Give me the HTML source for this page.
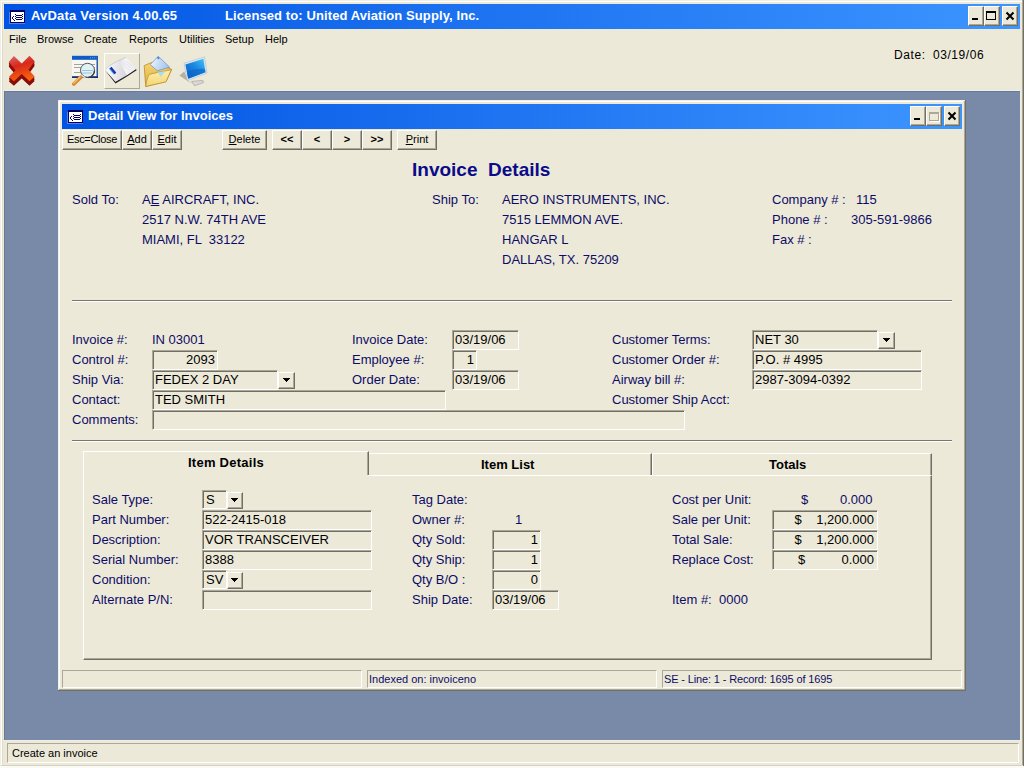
<!DOCTYPE html>
<html><head><meta charset="utf-8">
<style>
*{box-sizing:border-box;margin:0;padding:0}
html,body{width:1024px;height:768px;overflow:hidden;background:#f4f3ee;font-family:"Liberation Sans",sans-serif}
.a{position:absolute}
.t{position:absolute;white-space:pre;font-size:13px;line-height:20px;color:#0c0c68}
.k{color:#000}
.face{background:#ece9d8}
/* classic raised button */
.btn{position:absolute;background:#ece9d8;border-top:1px solid #fff;border-left:1px solid #fff;border-right:1px solid #716f64;border-bottom:1px solid #716f64;box-shadow:inset -1px -1px 0 #aca899;font-size:11px;line-height:17px;text-align:center;color:#000;white-space:pre}
/* sunken edit */
.ed{position:absolute;background:#ece9d8;border-top:1px solid #aca899;border-left:1px solid #aca899;border-right:1px solid #fff;border-bottom:1px solid #fff;box-shadow:inset 1px 1px 0 #716f64;font-size:13px;line-height:17px;color:#000;white-space:pre;padding-left:2px}
.cb{position:absolute;background:#ece9d8;border-top:1px solid #fff;border-left:1px solid #fff;border-right:1px solid #716f64;border-bottom:1px solid #716f64;box-shadow:inset -1px -1px 0 #aca899}
.pane{position:absolute;border-top:1px solid #aca899;border-left:1px solid #aca899;border-right:1px solid #fff;border-bottom:1px solid #fff}
.hl{position:absolute;height:1px}
</style></head>
<body>
<!-- main window frame -->
<div class="a face" style="left:0;top:0;width:1024px;height:766px"></div>
<div class="a" style="left:1px;top:1px;width:1px;height:764px;background:#fff"></div>
<div class="a" style="left:1px;top:1px;width:1021px;height:1px;background:#fff"></div>
<div class="a" style="left:1022px;top:0;width:1px;height:765px;background:#aca899"></div>
<div class="a" style="left:1023px;top:0;width:1px;height:766px;background:#716f64"></div>

<div class="a" style="left:0;top:765px;width:1022px;height:1px;background:#d4d0c4"></div><div class="a" style="left:0;top:766px;width:1024px;height:2px;background:#fbfbf6"></div>

<!-- main title bar -->
<div class="a" style="left:4px;top:4px;width:1016px;height:25px;background:linear-gradient(to right,#0054e3,#3d95ff)"></div>
<div class="t" style="left:31px;top:6px;font-size:13px;font-weight:bold;color:#fff;line-height:20px;letter-spacing:0.2px">AvData Version 4.00.65</div>
<div class="t" style="left:225px;top:6px;font-size:13px;font-weight:bold;color:#fff;line-height:20px;letter-spacing:0.1px">Licensed to: United Aviation Supply, Inc.</div>


<!-- main frame details -->
<div class="a" style="left:0;top:0;width:1022px;height:1px;background:#f1efe2"></div>
<div class="a" style="left:0;top:0;width:1px;height:766px;background:#f1efe2"></div>
<div class="a" style="left:2px;top:2px;width:1px;height:762px;background:#dedbcb"></div>
<!-- main caption icon -->
<svg class="a" style="left:9px;top:10px" width="16" height="14" viewBox="0 0 16 14" shape-rendering="crispEdges"><rect x="0" y="2" width="1" height="11" fill="#5a80e8"/><rect x="0" y="13" width="16" height="1" fill="#5a80e8"/><rect x="1" y="0" width="15" height="13" fill="#000060"/><rect x="2" y="2" width="13" height="10" fill="#fff"/><rect x="7" y="5" width="6" height="1" fill="#000060"/><rect x="7" y="7" width="6" height="1" fill="#000060"/><rect x="7" y="9" width="6" height="1" fill="#000060"/><rect x="6" y="4" width="1" height="1" fill="#000060"/><rect x="13" y="4" width="1" height="1" fill="#000060"/><rect x="6" y="6" width="1" height="1" fill="#000060"/><rect x="13" y="6" width="1" height="1" fill="#000060"/><rect x="6" y="8" width="1" height="1" fill="#000060"/><rect x="13" y="8" width="1" height="1" fill="#000060"/><rect x="4" y="6" width="1" height="1" fill="#000060"/><rect x="3" y="7" width="1" height="1" fill="#000060"/><rect x="3" y="8" width="1" height="1" fill="#000060"/><rect x="4" y="9" width="1" height="1" fill="#000060"/><rect x="5" y="10" width="1" height="1" fill="#000060"/></svg>
<!-- main caption buttons -->
<div class="cb" style="left:968px;top:6px;width:16px;height:20px"></div>
<div class="a" style="left:972px;top:18px;width:6px;height:2px;background:#000"></div>
<div class="cb" style="left:984px;top:6px;width:16px;height:20px"></div>
<div class="a" style="left:986px;top:11px;width:10px;height:9px;border:1px solid #000;border-top-width:2px"></div>
<div class="cb" style="left:1002px;top:6px;width:16px;height:20px"></div>
<svg class="a" style="left:1002px;top:6px" width="16" height="20" viewBox="0 0 16 20"><path d="M4.5 6.5l7 7M11.5 6.5l-7 7" stroke="#000" stroke-width="2"/></svg>

<!-- menu -->
<div class="t k" style="left:9px;top:31px;font-size:11px;line-height:16px">File</div>
<div class="t k" style="left:37px;top:31px;font-size:11px;line-height:16px">Browse</div>
<div class="t k" style="left:84px;top:31px;font-size:11px;line-height:16px">Create</div>
<div class="t k" style="left:129px;top:31px;font-size:11px;line-height:16px">Reports</div>
<div class="t k" style="left:179px;top:31px;font-size:11px;line-height:16px">Utilities</div>
<div class="t k" style="left:225px;top:31px;font-size:11px;line-height:16px">Setup</div>
<div class="t k" style="left:265px;top:31px;font-size:11px;line-height:16px">Help</div>
<div class="t k" style="left:894px;top:47px;font-size:12px;line-height:16px;letter-spacing:0.6px">Date:</div>
<div class="t k" style="left:933px;top:47px;font-size:12px;line-height:16px;letter-spacing:0.55px">03/19/06</div>


<!-- toolbar icons -->
<svg class="a" style="left:8px;top:55px" width="28" height="32" viewBox="0 0 28 32">
<defs><linearGradient id="xg" x1="0" y1="0" x2="0.3" y2="1"><stop offset="0" stop-color="#d86a6a"/><stop offset="0.45" stop-color="#d8281c"/><stop offset="1" stop-color="#f4600c"/></linearGradient></defs>
<g fill="#8a0c08">
<path transform="translate(0,4.5)" d="M5.9 1L13.7 8.5L21.5 0.7L26.7 6.2L20.5 14.8L26.7 21.6L21.5 26.25L13.7 19L5.9 26.25L0.9 22L7.5 15.3L0.7 7Z"/>
<path transform="translate(0,3)" d="M5.9 1L13.7 8.5L21.5 0.7L26.7 6.2L20.5 14.8L26.7 21.6L21.5 26.25L13.7 19L5.9 26.25L0.9 22L7.5 15.3L0.7 7Z"/>
<path transform="translate(0,1.5)" d="M5.9 1L13.7 8.5L21.5 0.7L26.7 6.2L20.5 14.8L26.7 21.6L21.5 26.25L13.7 19L5.9 26.25L0.9 22L7.5 15.3L0.7 7Z"/>
</g>
<path fill="url(#xg)" d="M5.9 1L13.7 8.5L21.5 0.7L26.7 6.2L20.5 14.8L26.7 21.6L21.5 26.25L13.7 19L5.9 26.25L0.9 22L7.5 15.3L0.7 7Z"/>
</svg>

<svg class="a" style="left:68px;top:50px" width="36" height="40" viewBox="68 50 36 40">
<rect x="72" y="56" width="25.5" height="22" fill="#f8f6f0"/>
<rect x="72" y="55.8" width="26" height="4" fill="#0e5cc6"/>
<path d="M90 57.8h6.5" stroke="#8ab8f0" stroke-width="0.8" stroke-dasharray="1 1"/>
<rect x="96.5" y="58" width="1.5" height="20" fill="#2a5aa8"/>
<rect x="72" y="76.2" width="26" height="1.8" fill="#14306c"/>
<path d="M74 64.5h21M74 67.5h21M74 72.5h21" stroke="#a4a29a" stroke-width="1"/>
<circle cx="87.5" cy="70.3" r="7" fill="#dff2f8" stroke="#505860" stroke-width="1"/>
<path d="M88.5 77.5a7 7 0 0 0 6-7" fill="none" stroke="#3a4048" stroke-width="1.4"/>
<path d="M82 70.5h11M82 73h10" stroke="#8fb4c4" stroke-width="0.8"/>
<path d="M81.5 75.5a7 7 0 0 0 4 2" fill="none" stroke="#ffffff" stroke-width="1.2"/>
<path d="M80.8 77.2L73.8 84" stroke="#d88a30" stroke-width="3.8" stroke-linecap="round"/>
<path d="M80 77L73.6 83.2" stroke="#f8c070" stroke-width="1.2" stroke-linecap="round"/>
</svg>

<div class="a" style="left:104px;top:53px;width:36px;height:36px;border-top:1px solid #fff;border-left:1px solid #fff;border-right:1px solid #aca899;border-bottom:1px solid #aca899"></div>
<svg class="a" style="left:102px;top:50px" width="40" height="40" viewBox="102 50 40 40">
<defs><linearGradient id="bk1" x1="0" y1="0" x2="1" y2="0"><stop offset="0" stop-color="#fdfdfd"/><stop offset="1" stop-color="#d4d4dc"/></linearGradient>
<linearGradient id="bk2" x1="0" y1="0" x2="1" y2="0"><stop offset="0" stop-color="#dcdce4"/><stop offset="0.4" stop-color="#f4f4f6"/><stop offset="1" stop-color="#ececf0"/></linearGradient></defs>
<path d="M105.2 70.5L115.5 83.6L127 76.6L136.6 70.3L135.8 68.6L126.5 75L115.5 81.6Z" fill="#1e1e1e"/>
<path d="M105.4 69.6L109.5 65.8L117.8 60.8L118.8 61.2L127 75.2L115.5 81.8Z" fill="url(#bk1)"/>
<path d="M118.8 61.2L120.5 59.8L126 57.3L136.2 69L127 75.2Z" fill="url(#bk2)"/>
<path d="M105.4 69.6L109.5 65.8L117.8 60.8L120.5 59.8L126 57.3" fill="none" stroke="#b8b8c4" stroke-width="0.6"/>
<path d="M124 62.5L131.5 68.5M122.5 64.5L129.5 70.3M125.5 60.8L133 66.5" stroke="#d8d8e0" stroke-width="0.6"/>
<path d="M109.3 68.2L114.2 74" stroke="#7ab4f0" stroke-width="1.4"/>
<path d="M110.6 67.6L115.4 73.4" stroke="#1434b4" stroke-width="2.4"/>
</svg>

<svg class="a" style="left:140px;top:50px" width="36" height="40" viewBox="140 50 36 40">
<defs><linearGradient id="fd1" x1="0" y1="0" x2="0" y2="1"><stop offset="0" stop-color="#f4d470"/><stop offset="1" stop-color="#e0b040"/></linearGradient>
<linearGradient id="pp1" x1="0" y1="0" x2="1" y2="0.3"><stop offset="0" stop-color="#ffffff"/><stop offset="0.5" stop-color="#c8def8"/><stop offset="1" stop-color="#a8c8f0"/></linearGradient>
<linearGradient id="fd2" x1="0" y1="0" x2="0" y2="1"><stop offset="0" stop-color="#fcf0b0"/><stop offset="1" stop-color="#f4d470"/></linearGradient></defs>
<path d="M144.2 65.6L151.5 62.5L171.8 69.3L166 81.5L145.7 86.5Z" fill="url(#fd1)" stroke="#b88c28" stroke-width="0.8"/>
<path d="M158.2 56.25L150.4 64.6L157.2 70.8L169.7 67.2Z" fill="url(#pp1)" stroke="#6a8cc0" stroke-width="0.7"/>
<path d="M156.8 57.8L158.2 56.4L159.8 58.2L158.2 59.6Z" fill="#4a8ad8"/>
<path d="M145.7 86.5Q147 76 150 74.2L157.7 72.4L171.25 69.8L166 81.8Z" fill="url(#fd2)" stroke="#c09030" stroke-width="0.8"/>
<path d="M157.7 72.6L165.5 71L160.8 77Z" fill="#a8dcf4"/>
</svg>

<svg class="a" style="left:176px;top:50px" width="36" height="40" viewBox="176 50 36 40">
<defs><linearGradient id="sc1" x1="0" y1="1" x2="1" y2="0"><stop offset="0" stop-color="#0858c0"/><stop offset="0.55" stop-color="#1c88e0"/><stop offset="1" stop-color="#44c4f8"/></linearGradient></defs>
<path d="M179.4 75.6L184.3 71.5L188 80.5L192 84Z" fill="#b4b0a4"/>
<path d="M191.5 81.4L202.8 80.4L203.6 82.6L194.5 85.8Z" fill="#d8d8d8" stroke="#9a9a9a" stroke-width="0.6"/>
<path d="M184 63.2L204.6 56.9L207 73.1L187.3 80.6Z" fill="#dceaf8" stroke="#a8bcd0" stroke-width="0.6"/>
<path d="M185.4 64.4L203.4 58.8L205.5 72.2L188.2 78.8Z" fill="url(#sc1)"/>
<path d="M186.8 71.5Q196 68 205 69L205.5 72.2L188.2 78.8Z" fill="#0a64c8" opacity="0.6"/>
</svg>

<!-- MDI area -->
<div class="a" style="left:4px;top:90px;width:1016px;height:1px;background:#eceef0"></div><div class="a" style="left:4px;top:91px;width:1016px;height:649px;background:#788aa8;border-top:1px solid #6a7a96;border-left:1px solid #6a7a96"></div>

<div class="a" style="left:4px;top:740px;width:1017px;height:1px;background:#eeeee8"></div><div class="a" style="left:1020px;top:90px;width:1px;height:651px;background:#eeeee8"></div>
<!-- child window -->
<div class="a face" style="left:58px;top:100px;width:908px;height:591px"></div>
<div class="a" style="left:58px;top:100px;width:906px;height:1px;background:#f1efe2"></div>
<div class="a" style="left:58px;top:100px;width:1px;height:589px;background:#f1efe2"></div>
<div class="a" style="left:59px;top:101px;width:904px;height:1px;background:#fff"></div>
<div class="a" style="left:59px;top:101px;width:1px;height:587px;background:#fff"></div>
<div class="a" style="left:964px;top:101px;width:1px;height:589px;background:#aca899"></div>
<div class="a" style="left:59px;top:689px;width:906px;height:1px;background:#aca899"></div>
<div class="a" style="left:965px;top:100px;width:1px;height:591px;background:#716f64"></div>
<div class="a" style="left:58px;top:690px;width:908px;height:1px;background:#716f64"></div>
<div class="a" style="left:62px;top:104px;width:900px;height:25px;background:linear-gradient(to right,#0054e3,#3d95ff)"></div>
<div class="t" style="left:88px;top:106px;font-weight:bold;color:#fff">Detail View for Invoices</div>


<!-- child caption icon -->
<svg class="a" style="left:67px;top:110px" width="16" height="14" viewBox="0 0 16 14" shape-rendering="crispEdges"><rect x="0" y="2" width="1" height="11" fill="#5a80e8"/><rect x="0" y="13" width="16" height="1" fill="#5a80e8"/><rect x="1" y="0" width="15" height="13" fill="#000060"/><rect x="2" y="2" width="13" height="10" fill="#fff"/><rect x="7" y="5" width="6" height="1" fill="#000060"/><rect x="7" y="7" width="6" height="1" fill="#000060"/><rect x="7" y="9" width="6" height="1" fill="#000060"/><rect x="6" y="4" width="1" height="1" fill="#000060"/><rect x="13" y="4" width="1" height="1" fill="#000060"/><rect x="6" y="6" width="1" height="1" fill="#000060"/><rect x="13" y="6" width="1" height="1" fill="#000060"/><rect x="6" y="8" width="1" height="1" fill="#000060"/><rect x="13" y="8" width="1" height="1" fill="#000060"/><rect x="4" y="6" width="1" height="1" fill="#000060"/><rect x="3" y="7" width="1" height="1" fill="#000060"/><rect x="3" y="8" width="1" height="1" fill="#000060"/><rect x="4" y="9" width="1" height="1" fill="#000060"/><rect x="5" y="10" width="1" height="1" fill="#000060"/></svg>
<!-- child caption buttons -->
<div class="cb" style="left:910px;top:106px;width:16px;height:20px"></div>
<div class="a" style="left:914px;top:118px;width:6px;height:2px;background:#000"></div>
<div class="cb" style="left:926px;top:106px;width:16px;height:20px"></div>
<div class="a" style="left:929px;top:112px;width:10px;height:9px;border:1px solid #aca899;border-top-width:2px;box-shadow:1px 1px 0 #fff"></div>
<div class="cb" style="left:944px;top:106px;width:16px;height:20px"></div>
<svg class="a" style="left:944px;top:106px" width="16" height="20" viewBox="0 0 16 20"><path d="M4.5 6.5l7 7M11.5 6.5l-7 7" stroke="#000" stroke-width="2"/></svg>

<!-- child toolbar -->
<div class="btn" style="left:62px;top:130px;width:60px;height:20px;letter-spacing:-0.3px">Esc=Close</div>
<div class="btn" style="left:122px;top:130px;width:30px;height:20px"><u>A</u>dd</div>
<div class="btn" style="left:152px;top:130px;width:30px;height:20px"><u>E</u>dit</div>
<div class="btn" style="left:222px;top:130px;width:45px;height:20px"><u>D</u>elete</div>
<div class="btn" style="left:272px;top:130px;width:30px;height:20px;font-weight:bold">&lt;&lt;</div>
<div class="btn" style="left:302px;top:130px;width:30px;height:20px;font-weight:bold">&lt;</div>
<div class="btn" style="left:332px;top:130px;width:30px;height:20px;font-weight:bold">&gt;</div>
<div class="btn" style="left:362px;top:130px;width:30px;height:20px;font-weight:bold">&gt;&gt;</div>
<div class="btn" style="left:397px;top:130px;width:40px;height:20px"><u>P</u>rint</div>

<div class="t" style="left:412px;top:158px;font-size:19px;font-weight:bold;color:#0a0a8a;line-height:24px">Invoice  Details</div>

<div class="t" style="left:72px;top:190px">Sold To:</div>
<div class="t" style="left:142px;top:190px">A<u>E</u> AIRCRAFT, INC.</div>
<div class="t" style="left:142px;top:210px">2517 N.W. 74TH AVE</div>
<div class="t" style="left:142px;top:230px">MIAMI, FL  33122</div>

<div class="t" style="left:432px;top:190px">Ship To:</div>
<div class="t" style="left:502px;top:190px">AERO INSTRUMENTS, INC.</div>
<div class="t" style="left:502px;top:210px">7515 LEMMON AVE.</div>
<div class="t" style="left:502px;top:230px">HANGAR L</div>
<div class="t" style="left:502px;top:250px">DALLAS, TX. 75209</div>

<div class="t" style="left:772px;top:190px">Company # :</div>
<div class="t" style="left:856px;top:190px">115</div>
<div class="t" style="left:772px;top:210px">Phone # :</div>
<div class="t" style="left:851px;top:210px">305-591-9866</div>
<div class="t" style="left:772px;top:230px">Fax # :</div>

<div class="hl" style="left:72px;top:300px;width:880px;background:#78766c"></div><div class="hl" style="left:72px;top:301px;width:880px;background:#fff"></div>


<!-- invoice fields -->
<div class="t" style="left:72px;top:330px">Invoice #:</div>
<div class="t" style="left:152px;top:330px">IN 03001</div>
<div class="t" style="left:72px;top:350px">Control #:</div>
<div class="ed" style="left:152px;top:350px;width:66px;height:20px;text-align:right;padding-right:2px">2093</div>
<div class="t" style="left:72px;top:370px">Ship Via:</div>
<div class="ed" style="left:152px;top:370px;width:126px;height:20px">FEDEX 2 DAY</div>
<div class="cb" style="left:278px;top:372px;width:17px;height:17px"></div><div class="a" style="left:283px;top:378px;width:7px;height:1px;background:#000"></div><div class="a" style="left:284px;top:379px;width:5px;height:1px;background:#000"></div><div class="a" style="left:285px;top:380px;width:3px;height:1px;background:#000"></div><div class="a" style="left:286px;top:381px;width:1px;height:1px;background:#000"></div>
<div class="t" style="left:72px;top:390px">Contact:</div>
<div class="ed" style="left:152px;top:390px;width:294px;height:20px">TED SMITH</div>
<div class="t" style="left:72px;top:410px">Comments:</div>
<div class="ed" style="left:152px;top:410px;width:533px;height:20px"></div>

<div class="t" style="left:352px;top:330px">Invoice Date:</div>
<div class="ed" style="left:452px;top:330px;width:67px;height:20px">03/19/06</div>
<div class="t" style="left:352px;top:350px">Employee #:</div>
<div class="ed" style="left:452px;top:350px;width:25px;height:20px;text-align:right;padding-right:2px">1</div>
<div class="t" style="left:352px;top:370px">Order Date:</div>
<div class="ed" style="left:452px;top:370px;width:67px;height:20px">03/19/06</div>

<div class="t" style="left:612px;top:330px">Customer Terms:</div>
<div class="ed" style="left:752px;top:330px;width:126px;height:20px">NET 30</div>
<div class="cb" style="left:878px;top:332px;width:17px;height:17px"></div><div class="a" style="left:883px;top:338px;width:7px;height:1px;background:#000"></div><div class="a" style="left:884px;top:339px;width:5px;height:1px;background:#000"></div><div class="a" style="left:885px;top:340px;width:3px;height:1px;background:#000"></div><div class="a" style="left:886px;top:341px;width:1px;height:1px;background:#000"></div>
<div class="t" style="left:612px;top:350px">Customer Order #:</div>
<div class="ed" style="left:752px;top:350px;width:170px;height:20px">P.O. # 4995</div>
<div class="t" style="left:612px;top:370px">Airway bill #:</div>
<div class="ed" style="left:752px;top:370px;width:170px;height:20px">2987-3094-0392</div>
<div class="t" style="left:612px;top:390px">Customer Ship Acct:</div>

<div class="hl" style="left:72px;top:440px;width:880px;background:#78766c"></div><div class="hl" style="left:72px;top:441px;width:880px;background:#fff"></div>

<!-- tabs -->
<div class="a" style="left:83px;top:475px;width:849px;height:185px;border-left:1px solid #fff;border-top:1px solid #fff;border-right:1px solid #716f64;border-bottom:1px solid #716f64;box-shadow:inset -1px -1px 0 #aca899"></div>
<div class="a face" style="left:368px;top:453px;width:284px;height:22px;border-top:1px solid #fff;border-right:1px solid #716f64;box-shadow:inset -1px 0 0 #aca899"></div>
<div class="a face" style="left:652px;top:453px;width:280px;height:22px;border-top:1px solid #fff;border-left:1px solid #fff;border-right:1px solid #716f64;box-shadow:inset -1px 0 0 #aca899"></div>
<div class="a face" style="left:83px;top:451px;width:286px;height:24px;border-top:1px solid #fff;border-left:1px solid #fff;border-right:1px solid #716f64;box-shadow:inset -1px 0 0 #aca899"></div><div class="a face" style="left:84px;top:475px;width:284px;height:1px"></div>
<div class="t k" style="left:188px;top:453px;font-weight:bold;letter-spacing:0.25px">Item Details</div>
<div class="t k" style="left:481px;top:455px;font-weight:bold">Item List</div>
<div class="t k" style="left:769px;top:455px;font-weight:bold">Totals</div>

<div class="t" style="left:92px;top:490px">Sale Type:</div>
<div class="ed" style="left:202px;top:490px;width:25px;height:19px;padding-left:3px">S</div>
<div class="cb" style="left:227px;top:492px;width:16px;height:17px"></div><div class="a" style="left:231px;top:498px;width:7px;height:1px;background:#000"></div><div class="a" style="left:232px;top:499px;width:5px;height:1px;background:#000"></div><div class="a" style="left:233px;top:500px;width:3px;height:1px;background:#000"></div><div class="a" style="left:234px;top:501px;width:1px;height:1px;background:#000"></div>
<div class="t" style="left:92px;top:510px">Part Number:</div>
<div class="ed" style="left:202px;top:510px;width:170px;height:20px">522-2415-018</div>
<div class="t" style="left:92px;top:530px">Description:</div>
<div class="ed" style="left:202px;top:530px;width:170px;height:20px">VOR TRANSCEIVER</div>
<div class="t" style="left:92px;top:550px">Serial Number:</div>
<div class="ed" style="left:202px;top:550px;width:170px;height:20px">8388</div>
<div class="t" style="left:92px;top:570px">Condition:</div>
<div class="ed" style="left:202px;top:570px;width:25px;height:19px;padding-left:3px">SV</div>
<div class="cb" style="left:227px;top:572px;width:16px;height:17px"></div><div class="a" style="left:231px;top:578px;width:7px;height:1px;background:#000"></div><div class="a" style="left:232px;top:579px;width:5px;height:1px;background:#000"></div><div class="a" style="left:233px;top:580px;width:3px;height:1px;background:#000"></div><div class="a" style="left:234px;top:581px;width:1px;height:1px;background:#000"></div>
<div class="t" style="left:92px;top:590px">Alternate P/N:</div>
<div class="ed" style="left:202px;top:590px;width:170px;height:20px"></div>

<div class="t" style="left:412px;top:490px">Tag Date:</div>
<div class="t" style="left:412px;top:510px">Owner #:</div>
<div class="t" style="left:515px;top:510px">1</div>
<div class="t" style="left:412px;top:530px">Qty Sold:</div>
<div class="ed" style="left:492px;top:530px;width:49px;height:20px;text-align:right;padding-right:2px">1</div>
<div class="t" style="left:412px;top:550px">Qty Ship:</div>
<div class="ed" style="left:492px;top:550px;width:49px;height:20px;text-align:right;padding-right:2px">1</div>
<div class="t" style="left:412px;top:570px">Qty B/O :</div>
<div class="ed" style="left:492px;top:570px;width:49px;height:20px;text-align:right;padding-right:2px">0</div>
<div class="t" style="left:412px;top:590px">Ship Date:</div>
<div class="ed" style="left:492px;top:590px;width:67px;height:20px">03/19/06</div>

<div class="t" style="left:672px;top:490px">Cost per Unit:</div>
<div class="t" style="left:801px;top:490px">$</div>
<div class="t" style="left:840px;top:490px">0.000</div>
<div class="t" style="left:672px;top:510px">Sale per Unit:</div>
<div class="ed" style="left:772px;top:510px;width:106px;height:20px;text-align:right;padding-right:3px">$    1,200.000</div>
<div class="t" style="left:672px;top:530px">Total Sale:</div>
<div class="ed" style="left:772px;top:530px;width:106px;height:20px;text-align:right;padding-right:3px">$    1,200.000</div>
<div class="t" style="left:672px;top:550px">Replace Cost:</div>
<div class="ed" style="left:772px;top:550px;width:106px;height:20px;text-align:right;padding-right:3px">$          0.000</div>
<div class="t" style="left:672px;top:590px">Item #:  0000</div>

<!-- child status bar -->
<div class="pane" style="left:62px;top:670px;width:300px;height:18px"></div>
<div class="pane" style="left:367px;top:670px;width:290px;height:18px"></div>
<div class="pane" style="left:662px;top:670px;width:300px;height:18px"></div>
<div class="t" style="left:369px;top:669px;font-size:11px">Indexed on: invoiceno</div>
<div class="t" style="left:664px;top:669px;font-size:11px;letter-spacing:-0.14px">SE - Line: 1 - Record: 1695 of 1695</div>

<!-- main status bar -->
<div class="pane" style="left:7px;top:743px;width:1012px;height:20px"></div>
<div class="t k" style="left:12px;top:743px;font-size:11px">Create an invoice</div>

</body></html>
